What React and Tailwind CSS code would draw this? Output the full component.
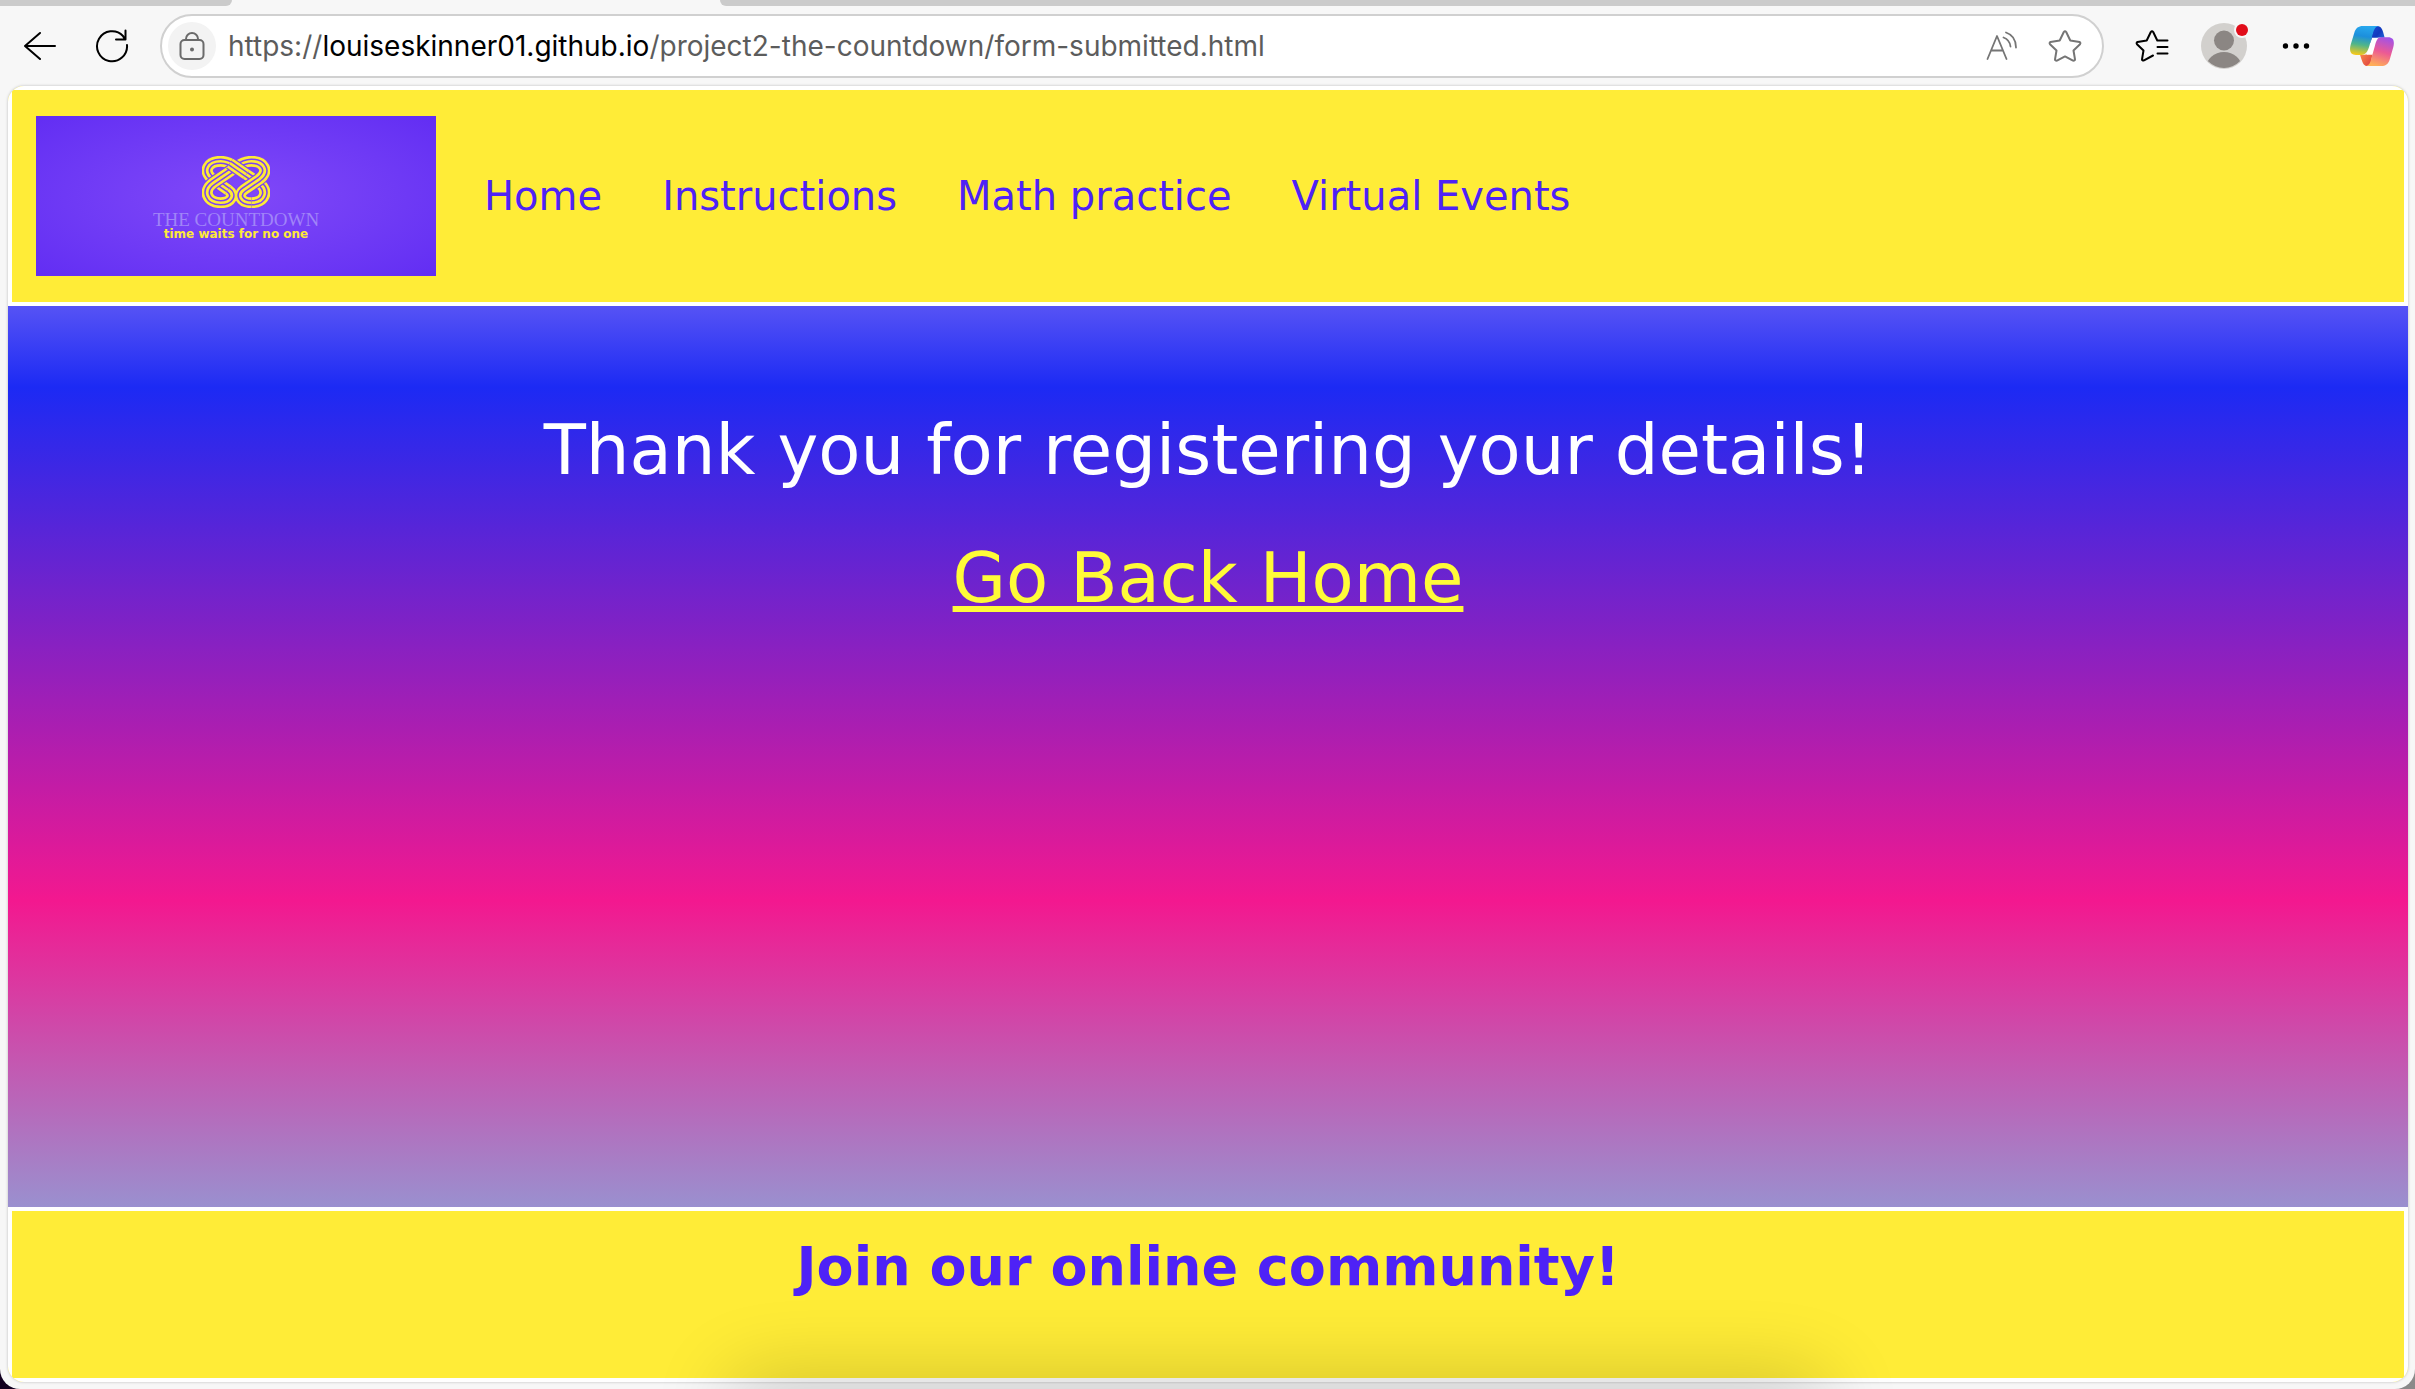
const ROPE_UNDER =
  'M80 104 L34 71 C2 46 20 16 57 16 C80 16 92 27 104 36 L168 81 C202 106 186 142 147 142';
const ROPE_OVER =
  'M147 142 C116 142 104 118 126 102 L170 71 C202 46 184 16 147 16 C124 16 112 27 100 36 L36 81 C2 106 18 142 57 142 C88 142 100 118 79 103';
const ROPE_TOP = 'M84 22 C92 27 98 32 104 36 L132 56';

const NAV_LINKS = ['Home', 'Instructions', 'Math practice', 'Virtual Events'];

function Rope({ d }) {
  return (
    <g fill="none" strokeLinejoin="round">
      <path d={d} stroke="#7b41f6" strokeWidth="40" />
      <path d={d} stroke="#fdea37" strokeWidth="33" />
      <path d={d} stroke="#7b41f6" strokeWidth="17" />
      <path d={d} stroke="#fdea37" strokeWidth="8" />
    </g>
  );
}

function BrandLogo() {
  return (
    <a
      href="#home"
      aria-label="The Countdown"
      className="flex h-40 w-[400px] shrink-0 flex-col items-center bg-radial from-[#8148f8] to-[#622df3] pt-10"
    >
      <svg viewBox="2 0 200 158" preserveAspectRatio="none" className="h-[52px] w-[68px]" aria-hidden="true">
        <Rope d={ROPE_UNDER} />
        <Rope d={ROPE_OVER} />
        <Rope d={ROPE_TOP} />
      </svg>
      <span className="mt-1 font-['Liberation_Serif',serif] text-[19px] leading-4 text-[#a084f8]">THE COUNTDOWN</span>
      <span className="font-['DejaVu_Sans',sans-serif] text-xs leading-3 font-bold text-[#fdea37]">
        time waits for no one
      </span>
    </a>
  );
}

function BackIcon() {
  return (
    <svg viewBox="0 0 32 32" className="size-8" fill="none" stroke="currentColor" strokeWidth="2" strokeLinecap="round" strokeLinejoin="round">
      <path d="M16 3 L1 16 L16 29 M1 16 H31" />
    </svg>
  );
}

function ReloadIcon() {
  return (
    <svg viewBox="0 0 34 34" className="size-[34px]" fill="none" stroke="currentColor" strokeWidth="2" strokeLinecap="round" strokeLinejoin="round">
      <path d="M32 16 A15 15 0 1 1 28 7 L30 10.500 M21 10.500 H30.500 V1.500" />
    </svg>
  );
}

function LockIcon() {
  return (
    <svg viewBox="0 0 26 28" className="h-7 w-[26px]" fill="none" stroke="#6b6b6b" strokeWidth="2">
      <rect x="1.500" y="8" width="23" height="19" rx="4" />
      <path d="M7 8 V7 A6 6 0 0 1 19 7 V8" />
      <circle cx="13" cy="17.500" r="2" fill="#6b6b6b" stroke="none" />
    </svg>
  );
}

function ReadAloudIcon() {
  return (
    <svg viewBox="0 0 32 30" className="h-[30px] w-8" fill="none" stroke="#757575" strokeWidth="1.800" strokeLinecap="round" strokeLinejoin="round">
      <path d="M1.500 28 L11 5 L20.500 28 M5.500 19.500 H17" />
      <path d="M17.500 6.500 C21.500 8 24 11 24.500 15.500 M20 1.500 C26 3.500 30 9 30 16.500" />
    </svg>
  );
}

function StarIcon() {
  return (
    <svg viewBox="0 0 34 32" className="h-8 w-[34px]" fill="none" stroke="#757575" strokeWidth="2" strokeLinejoin="round">
      <path d="M15.800 2 Q17 0.500 18.200 2 L22.300 10.500 L31.500 12 Q33 12.800 32 14.200 L25.500 20.500 L27 29.300 Q26.800 31 25 30.600 L17 26.400 L9 30.600 Q7.200 31 7 29.300 L8.500 20.500 L2 14.200 Q1 12.800 2.500 12 L11.700 10.500 Z" />
    </svg>
  );
}

function FavoritesIcon() {
  return (
    <svg viewBox="0 0 34 32" className="h-8 w-[34px]" fill="none" stroke="currentColor" strokeWidth="2" strokeLinecap="round" strokeLinejoin="round">
      <path d="M18 25.500 L9 30.300 Q7.200 31 7 29.300 L8.500 20.500 L2 14.200 Q1 12.800 2.500 12 L11.700 10.500 L15.800 2 Q17 0.500 18.200 2 L22.300 10.500 H32.500 M22.500 17 H32.500 M22.500 23.500 H32.500" />
    </svg>
  );
}

function AvatarIcon() {
  return (
    <svg viewBox="0 0 50 48" className="h-12 w-[50px]">
      <defs>
        <clipPath id="avatar">
          <circle cx="24" cy="24" r="22" />
        </clipPath>
      </defs>
      <circle cx="24" cy="24" r="23" fill="#d2d0cd" />
      <g clipPath="url(#avatar)" fill="#8b8683">
        <circle cx="24" cy="18.500" r="10" />
        <ellipse cx="24" cy="46" rx="18" ry="16" />
      </g>
      <circle cx="42" cy="8" r="8" fill="#f7f7f7" />
      <circle cx="42" cy="8" r="6" fill="#e10d1a" />
    </svg>
  );
}

function MoreIcon() {
  return (
    <svg viewBox="0 0 28 8" className="h-2 w-7" fill="currentColor">
      <circle cx="3.500" cy="4" r="2.700" />
      <circle cx="14" cy="4" r="2.700" />
      <circle cx="24.500" cy="4" r="2.700" />
    </svg>
  );
}

function AssistantIcon() {
  return (
    <svg viewBox="0 0 132 120" className="h-10 w-11">
      <defs>
        <linearGradient id="leaf" x1="0.500" y1="0" x2="0.350" y2="1">
          <stop offset="0" stopColor="#28a8ee" />
          <stop offset="0.350" stopColor="#1c8fdc" />
          <stop offset="0.650" stopColor="#4fb58a" />
          <stop offset="1" stopColor="#f4c91c" />
        </linearGradient>
        <linearGradient id="bloom" x1="0.700" y1="0" x2="0.400" y2="1">
          <stop offset="0" stopColor="#a352e6" />
          <stop offset="0.500" stopColor="#ec5a94" />
          <stop offset="1" stopColor="#ffae58" />
        </linearGradient>
        <linearGradient id="fold" x1="0" y1="0" x2="1" y2="1">
          <stop offset="0" stopColor="#1a50d8" />
          <stop offset="0.500" stopColor="#1239bd" />
          <stop offset="1" stopColor="#2b7de8" />
        </linearGradient>
        <linearGradient id="ember" x1="0" y1="0" x2="1" y2="1">
          <stop offset="0" stopColor="#ff9a4a" />
          <stop offset="1" stopColor="#dc3440" />
        </linearGradient>
      </defs>
      <path d="M72 0 H82 C94 0 98 10 104 35 H90 C78 35 70 40 60 52 Z" fill="url(#fold)" />
      <path d="M60 120 H52 C40 120 37 108 30 86 H44 C56 86 66 78 72 66 Z" fill="url(#ember)" />
      <path d="M50 86 L66 35 H92 L72 86 Z" fill="#fff" />
      <path d="M38 0 H86 C74 2 71 14 67 28 L58 60 C53 76 47 87 34 87 H18 C2 87 -3 76 2 56 L13 20 C17 6 26 0 38 0 Z" fill="url(#leaf)" />
      <path d="M94 34 H114 C131 34 134 46 130 63 L119 101 C115 114 106 120 94 120 H48 C60 118 62 106 65 94 L74 62 C79 44 82 34 94 34 Z" fill="url(#bloom)" />
    </svg>
  );
}

function Toolbar() {
  return (
    <div className="flex h-20 items-center pr-[21px] pl-6 text-black">
      <button type="button" aria-label="Back"><BackIcon /></button>
      <button type="button" aria-label="Reload" className="ml-[39px]"><ReloadIcon /></button>
      <div className="ml-[31px] flex h-16 min-w-0 flex-1 items-center rounded-full border-2 border-[#d0d0d0] bg-white pr-5 pl-1.5">
        <button type="button" aria-label="Site information" className="flex size-12 shrink-0 items-center justify-center rounded-full bg-[#f3f3f3]">
          <LockIcon />
        </button>
        <div className="ml-3 min-w-0 flex-1 truncate font-['Inter',sans-serif] text-[28px] leading-10 text-[#5c5c5c]">
          https://<span className="text-black">louiseskinner01.github.io</span>/project2-the-countdown/form-submitted.html
        </div>
        <div className="flex items-center gap-[30px]">
          <button type="button" aria-label="Read aloud"><ReadAloudIcon /></button>
          <button type="button" aria-label="Add to favorites"><StarIcon /></button>
        </div>
      </div>
      <button type="button" aria-label="Favorites" className="ml-[31px]"><FavoritesIcon /></button>
      <button type="button" aria-label="Profile" className="ml-[31px]"><AvatarIcon /></button>
      <button type="button" aria-label="More" className="ml-8"><MoreIcon /></button>
      <button type="button" aria-label="Assistant" className="ml-10"><AssistantIcon /></button>
    </div>
  );
}

export default function App() {
  return (
    <div className="bg-linear-to-r from-[#12001f] to-[#8a8a8a]">
      <div className="relative flex min-h-screen flex-col overflow-hidden rounded-b-[20px] bg-[#f7f7f7]">
        <div className="flex h-1.5 shrink-0">
          <div className="w-[232px] rounded-br-full bg-[#cbcbcb]" />
          <div className="w-[488px]" />
          <div className="flex-1 rounded-bl-full bg-[#cbcbcb]" />
        </div>
        <Toolbar />
        <div className="mr-[7px] mb-[7px] ml-2 flex flex-1 flex-col overflow-hidden rounded-2xl bg-white font-['DejaVu_Sans',sans-serif] shadow-[0_0_3px_rgba(0,0,0,0.25)]">
          <header className="flex items-center gap-12 border-4 border-white bg-[#ffec37] px-6 py-[26px]">
            <BrandLogo />
            <nav className="flex gap-[60px] text-[40px] leading-[48px] text-[#4e22f6]">
              {NAV_LINKS.map((label) => (
                <a key={label} href="#nav">{label}</a>
              ))}
            </nav>
          </header>
          <main className="flex flex-1 flex-col items-center gap-12 bg-[linear-gradient(to_bottom,#5653f5_0%,#1c2af4_9%,#f3188f_66%,#9a90cf_100%)] pt-[104px] text-[69px] leading-[80px]">
            <h1 className="text-center text-white">Thank you for registering your details!</h1>
            <a href="#home" className="text-[#fffb38] underline decoration-[6px] underline-offset-4">Go Back Home</a>
          </main>
          <footer className="h-[175px] border-4 border-white bg-[#ffec37] pt-6">
            <h2 className="text-center text-[54px] leading-[64px] font-bold text-[#4e22f6]">Join our online community!</h2>
          </footer>
        </div>
        <div className="pointer-events-none absolute inset-x-0 -bottom-10 mx-auto h-10 w-[1080px] translate-x-[70px] rounded-3xl shadow-[0_0_80px_12px_rgba(0,0,0,0.2)]" />
      </div>
    </div>
  );
}
